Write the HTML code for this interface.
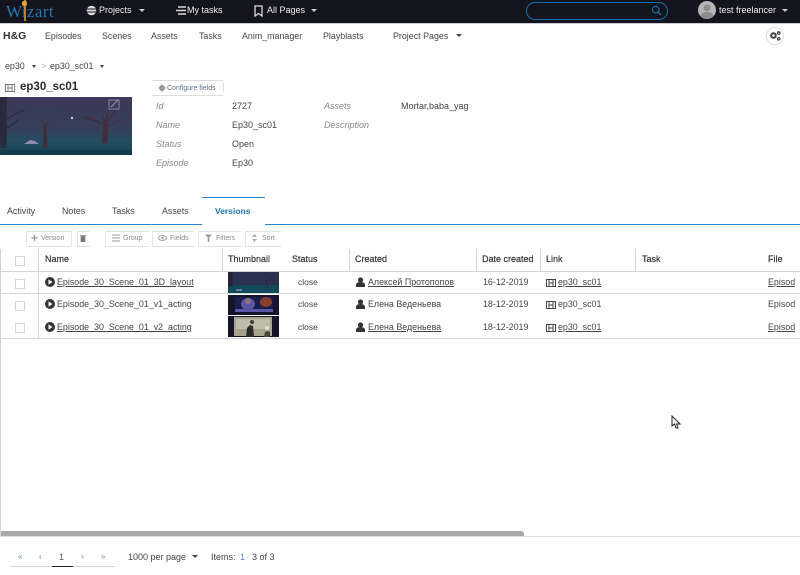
<!DOCTYPE html>
<html><head><meta charset="utf-8"><style>
html,body{margin:0;padding:0;background:#fff}
body{width:800px;height:575px;position:relative;overflow:hidden;font:9px "Liberation Sans",sans-serif;color:#333}
.a,.t{position:absolute;white-space:nowrap}
.t{line-height:12px;height:12px}
.nav{color:#eee;font-size:9px}
.m{color:#444;font-size:8.900px}
.l{color:#888;font-style:italic;font-size:9px}
.v{color:#444;font-size:9px}
.h{color:#333;font-size:9px;font-weight:normal;-webkit-text-stroke:.2px #333}
.u{text-decoration:underline;color:#333}
.r{font-size:8.900px;color:#444}
.car{position:absolute;width:0;height:0;border-left:3px solid transparent;border-right:3px solid transparent;border-top:3px solid #444}
.btn{position:absolute;top:231px;height:14px;border-top:1px solid #e2e2e2;border-bottom:1px solid #e2e2e2;border-left:1px solid #e6e6e6}
.bt{color:#888;font-size:7px}
.ln{position:absolute;background:#d4d4d4}
.cb{position:absolute;left:15px;width:8px;height:8px;border:1px solid #d6d6d6}
</style></head><body>
<div class="a" style="left:0;top:0;width:800px;height:23px;background:#14141e"></div>
<div class="a" style="left:0;top:23px;width:800px;height:1px;background:#ccc"></div>
<div class="t" style="left:6px;top:2px;height:20px;color:#1f78b4;font:17px/20px 'Liberation Serif',serif;letter-spacing:.4px">Wizart</div>
<div class="a" style="left:23.500px;top:0;width:2px;height:21px;background:#b8842a"></div>
<div class="a" style="left:22px;top:1px;width:5px;height:5px;background:#e0a235;border-radius:2px"></div>
<svg class="a" style="left:86px;top:5px" width="11" height="11" viewBox="0 0 11 11"><circle cx="5.500" cy="5.500" r="4.800" fill="#ddd"/><path d="M1 4h9M1 7h9" stroke="#14141e" stroke-width="1"/></svg>
<div class="t nav" style="left:99px;top:4px">Projects</div>
<div class="car" style="left:139px;top:9px;border-top-color:#ccc"></div>
<svg class="a" style="left:175px;top:5px" width="11" height="11" viewBox="0 0 11 11"><path d="M3 2h8M1 5.500h10M3 9h8" stroke="#ddd" stroke-width="1.600"/></svg>
<div class="t nav" style="left:187px;top:4px">My tasks</div>
<svg class="a" style="left:254px;top:5px" width="9" height="12" viewBox="0 0 9 12"><path d="M1 1h7v10L4.500 8.500 1 11z" fill="none" stroke="#ddd" stroke-width="1.300"/></svg>
<div class="t nav" style="left:267px;top:4px">All Pages</div>
<div class="car" style="left:311px;top:9px;border-top-color:#ccc"></div>
<div class="a" style="left:526px;top:2px;width:140px;height:16px;border:1px solid #0f6ea8;border-radius:9px"></div>
<svg class="a" style="left:651px;top:5px" width="11" height="11" viewBox="0 0 11 11"><circle cx="4.700" cy="4.700" r="3.300" fill="none" stroke="#0f6ea8" stroke-width="1.200"/><path d="M7 7l3 3" stroke="#0f6ea8" stroke-width="1.400"/></svg>
<svg class="a" style="left:698px;top:1px" width="18" height="18" viewBox="0 0 18 18"><circle cx="9" cy="9" r="9" fill="#b5b5b5"/><circle cx="9" cy="7" r="3.400" fill="#8d8d8d"/><path d="M2.500 15c1-3.500 3.500-4 6.500-4s5.500.5 6.500 4a9 9 0 0 1-13 0z" fill="#8d8d8d"/></svg>
<div class="t" style="left:719px;top:4px;color:#f0f0f0;font-size:9px">test freelancer</div>
<div class="car" style="left:782px;top:9px;border-top-color:#ccc"></div>

<div class="t" style="left:3px;top:30px;font-size:10.500px;font-weight:bold;color:#333">H&amp;G</div>
<div class="t m" style="left:45px;top:30px">Episodes</div>
<div class="t m" style="left:102px;top:30px">Scenes</div>
<div class="t m" style="left:151px;top:30px">Assets</div>
<div class="t m" style="left:199px;top:30px">Tasks</div>
<div class="t m" style="left:242px;top:30px">Anim_manager</div>
<div class="t m" style="left:323px;top:30px">Playblasts</div>
<div class="t m" style="left:393px;top:30px">Project Pages</div>
<div class="car" style="left:456px;top:34px"></div>
<div class="a" style="left:766px;top:27px;width:16px;height:16px;border:1px solid #ddd;border-radius:50%"></div>
<svg class="a" style="left:770px;top:31px" width="11" height="10" viewBox="0 0 11 10"><circle cx="3.500" cy="4.500" r="2.300" fill="none" stroke="#444" stroke-width="2"/><circle cx="8.700" cy="2" r="1.200" fill="none" stroke="#444" stroke-width="1.300"/><circle cx="8.700" cy="7.800" r="1.200" fill="none" stroke="#444" stroke-width="1.300"/></svg>

<div class="t m" style="left:5px;top:60px">ep30</div>
<div class="car" style="left:32px;top:65px;border-left-width:2.500px;border-right-width:2.500px"></div>
<div class="t" style="left:41px;top:60px;color:#aaa;font-size:9px">&gt;</div>
<div class="t m" style="left:50px;top:60px">ep30_sc01</div>
<div class="car" style="left:100px;top:65px;border-left-width:2.500px;border-right-width:2.500px"></div>
<svg class="a" style="left:5px;top:84px" width="10" height="8" viewBox="0 0 10 8"><path d="M.5.500h9v7h-9zM3 .5v7M7 .5v7M3 4h4" fill="none" stroke="#777" stroke-width="1"/></svg>
<div class="t" style="left:20px;top:81px;font-size:11.500px;font-weight:bold;color:#2a2a2a">ep30_sc01</div>

<svg class="a" style="left:0;top:97px" width="132" height="58" viewBox="0 0 132 58">
<defs><linearGradient id="g" x1="0" y1="0" x2="0" y2="1"><stop offset="0" stop-color="#3a3857"/><stop offset=".55" stop-color="#363f5a"/><stop offset=".75" stop-color="#244e62"/><stop offset="1" stop-color="#15404f"/></linearGradient></defs>
<rect width="132" height="58" fill="url(#g)"/>
<path d="M0 0h132v6c-20 3-40-3-60 1S30 10 0 5z" fill="#40385c" opacity=".7"/>
<path d="M0 0h6v50H1zM0 24c8-3 16-7 24-11M4 32c6-2 11-6 14-9" fill="#2b283c" stroke="#2b283c" stroke-width="1.200"/>
<path d="M43 50l1-22 1-2 1 2 1 22zM44 28l-4-8M46 30l3-6" fill="#3d2e3c" stroke="#43303c" stroke-width="1"/>
<path d="M102 46l2-20-1-6 3 4 1-8 1 10-1 20zM103 28c-5-5-12-7-20-8M106 26c4-4 8-9 10-14M106 30c5-2 11-6 16-7" fill="#3d2e3c" stroke="#43303e" stroke-width="1.200"/>
<path d="M24 47l6-4 5 1 4 3z" fill="#8b8bb5"/>
<circle cx="72" cy="21" r="1.200" fill="#c8c4da"/>
<rect x="109" y="3" width="10" height="9" fill="none" stroke="#8a8a9c" stroke-width="1"/><path d="M111 10l7-7" stroke="#9a9aac"/>
<path d="M0 53h132v5H0z" fill="#123a4a"/>
</svg>

<div class="a" style="left:152px;top:80px;width:71px;height:14px;border-top:1px solid #ddd;border-bottom:1px solid #ddd"></div>
<div class="a" style="left:223px;top:83px;width:1px;height:9px;background:#ddd"></div>
<svg class="a" style="left:158px;top:84px" width="8" height="8" viewBox="0 0 8 8"><circle cx="4" cy="4" r="2" fill="none" stroke="#888" stroke-width="1.500"/><path d="M4 0v8M0 4h8" stroke="#888" stroke-width=".800"/></svg>
<div class="t" style="left:167px;top:83px;font-size:7px;color:#5d6f8a">Configure fields</div>

<div class="t l" style="left:156px;top:100px">Id</div><div class="t v" style="left:232px;top:100px">2727</div>
<div class="t l" style="left:156px;top:119px">Name</div><div class="t v" style="left:232px;top:119px">Ep30_sc01</div>
<div class="t l" style="left:156px;top:138px">Status</div><div class="t v" style="left:232px;top:138px">Open</div>
<div class="t l" style="left:156px;top:157px">Episode</div><div class="t v" style="left:232px;top:157px">Ep30</div>
<div class="t l" style="left:324px;top:100px">Assets</div>
<div class="t l" style="left:324px;top:119px">Description</div>
<div class="t v" style="left:401px;top:100px;width:68px;overflow:hidden">Mortar,baba_yaga</div>

<div class="t m" style="left:7px;top:205px">Activity</div>
<div class="t m" style="left:62px;top:205px">Notes</div>
<div class="t m" style="left:112px;top:205px">Tasks</div>
<div class="t m" style="left:162px;top:205px">Assets</div>
<div class="t" style="left:215px;top:205px;color:#2277b5;font-weight:bold;font-size:8.500px">Versions</div>
<div class="a" style="left:0;top:224px;width:202px;height:1px;background:#2a85d0"></div>
<div class="a" style="left:265px;top:224px;width:535px;height:1px;background:#2a85d0"></div>
<div class="a" style="left:202px;top:197px;width:63px;height:1px;background:#2a85d0;border-radius:2px"></div>

<div class="btn" style="left:26px;width:44px;border-right:1px solid #e6e6e6"></div>
<div class="btn" style="left:77px;width:12px"></div>
<div class="btn" style="left:105px;width:43px"></div>
<div class="btn" style="left:152px;width:41px"></div>
<div class="btn" style="left:198px;width:42px"></div>
<div class="btn" style="left:245px;width:35px"></div>
<svg class="a" style="left:31px;top:234px" width="7" height="8" viewBox="0 0 7 8"><path d="M3.500 1v6M.5 4h6" stroke="#999" stroke-width="1.300"/></svg>
<div class="t bt" style="left:41px;top:233px">Version</div>
<svg class="a" style="left:80px;top:234px" width="6" height="8" viewBox="0 0 6 8"><path d="M0 1.500h6M1 2.500h4v5.500H1z" fill="#777" stroke="#777" stroke-width=".700"/></svg>
<svg class="a" style="left:112px;top:234px" width="8" height="8" viewBox="0 0 8 8"><path d="M0 1h8M0 4h8M0 7h8" stroke="#999" stroke-width="1"/></svg>
<div class="t bt" style="left:123px;top:233px">Group</div>
<svg class="a" style="left:158px;top:235px" width="9" height="6" viewBox="0 0 9 6"><ellipse cx="4.500" cy="3" rx="4" ry="2.400" fill="none" stroke="#999"/><circle cx="4.500" cy="3" r="1.200" fill="#999"/></svg>
<div class="t bt" style="left:170px;top:233px">Fields</div>
<svg class="a" style="left:205px;top:234px" width="7" height="8" viewBox="0 0 7 8"><path d="M0 .500h7L4.300 3.500V8H2.700V3.500z" fill="#999"/></svg>
<div class="t bt" style="left:216px;top:233px">Filters</div>
<svg class="a" style="left:252px;top:234px" width="5" height="8" viewBox="0 0 5 8"><path d="M2.500 0L5 3H0zM2.500 8L0 5h5z" fill="#aaa"/></svg>
<div class="t bt" style="left:262px;top:233px">Sort</div>

<div class="ln" style="left:0;top:249px;width:1px;height:287px"></div>
<div class="ln" style="left:38px;top:249px;width:1px;height:89px"></div>
<div class="ln" style="left:222px;top:249px;width:1px;height:22px"></div>
<div class="ln" style="left:349px;top:249px;width:1px;height:22px"></div>
<div class="ln" style="left:476px;top:249px;width:1px;height:22px"></div>
<div class="ln" style="left:540px;top:249px;width:1px;height:22px"></div>
<div class="ln" style="left:635px;top:249px;width:1px;height:22px"></div>
<div class="ln" style="left:0;top:271px;width:800px;height:1px"></div>
<div class="ln" style="left:0;top:293px;width:800px;height:1px"></div>
<div class="ln" style="left:0;top:338px;width:800px;height:1px"></div>
<div class="cb" style="top:256px"></div><div class="cb" style="top:279px"></div><div class="cb" style="top:301px"></div><div class="cb" style="top:323px"></div>

<div class="t h" style="left:45px;top:253px">Name</div>
<div class="t h" style="left:228px;top:253px">Thumbnail</div>
<div class="t h" style="left:292px;top:253px">Status</div>
<div class="t h" style="left:355px;top:253px">Created</div>
<div class="t h" style="left:482px;top:253px">Date created</div>
<div class="t h" style="left:546px;top:253px">Link</div>
<div class="t h" style="left:642px;top:253px">Task</div>
<div class="t h" style="left:768px;top:253px">File</div>

<svg class="a" style="left:45px;top:277px" width="10" height="10" viewBox="0 0 10 10"><circle cx="5" cy="5" r="5" fill="#333"/><path d="M3.500 2.400L7.500 5 3.500 7.600z" fill="#fff"/></svg>
<svg class="a" style="left:45px;top:299px" width="10" height="10" viewBox="0 0 10 10"><circle cx="5" cy="5" r="5" fill="#333"/><path d="M3.500 2.400L7.500 5 3.500 7.600z" fill="#fff"/></svg>
<svg class="a" style="left:45px;top:322px" width="10" height="10" viewBox="0 0 10 10"><circle cx="5" cy="5" r="5" fill="#333"/><path d="M3.500 2.400L7.500 5 3.500 7.600z" fill="#fff"/></svg>
<div class="t r u" style="left:57px;top:276px">Episode_30_Scene_01_3D_layout</div>
<div class="t r" style="left:57px;top:298px">Episode_30_Scene_01_v1_acting</div>
<div class="t r u" style="left:57px;top:321px">Episode_30_Scene_01_v2_acting</div>

<svg class="a" style="left:228px;top:272px" width="51" height="21" viewBox="0 0 51 21"><rect width="51" height="21" fill="#2b3150"/><rect y="13" width="51" height="8" fill="#134a5b"/><path d="M0 0h4v14H0zM38 8l2 9M40 10l5-4" stroke="#2a2434" fill="#252234"/><path d="M8 18h6" stroke="#8b8bb5" stroke-width="1.500"/></svg>
<svg class="a" style="left:228px;top:295px" width="51" height="20" viewBox="0 0 51 20"><rect width="51" height="20" fill="#15142a"/><rect x="7" y="2" width="38" height="15" fill="#1a1c4c"/><ellipse cx="20" cy="9" rx="7" ry="6" fill="#5a55a0"/><circle cx="20" cy="6" r="3" fill="#8a7278"/><ellipse cx="38" cy="7" rx="6" ry="5" fill="#8c3e2e"/><path d="M7 14h38v3H7z" fill="#5a56a8"/></svg>
<svg class="a" style="left:228px;top:316px" width="51" height="21" viewBox="0 0 51 21"><rect width="51" height="21" fill="#14142a"/><rect x="6" y="1" width="38" height="19" fill="#a8a48c"/><rect x="8" y="3" width="34" height="10" fill="#c0bcaa"/><path d="M18 21l1-9 3-3 3 1 1 11z" fill="#2b2b2b"/><circle cx="24" cy="6" r="2" fill="#4a3a30"/><path d="M36 21l1-5 3-1 2 1v5z" fill="#444"/><circle cx="39" cy="12" r="2" fill="#ddd"/></svg>

<div class="t r" style="left:298px;top:276px;font-size:8.500px">close</div>
<div class="t r" style="left:298px;top:298px;font-size:8.500px">close</div>
<div class="t r" style="left:298px;top:321px;font-size:8.500px">close</div>

<svg class="a" style="left:356px;top:277px" width="9" height="10" viewBox="0 0 9 10"><circle cx="4.500" cy="3" r="2.600" fill="#333"/><path d="M0 10V8c0-2 2-3 4.500-3S9 6 9 8v2z" fill="#333"/></svg>
<svg class="a" style="left:356px;top:299px" width="9" height="10" viewBox="0 0 9 10"><circle cx="4.500" cy="3" r="2.600" fill="#333"/><path d="M0 10V8c0-2 2-3 4.500-3S9 6 9 8v2z" fill="#333"/></svg>
<svg class="a" style="left:356px;top:322px" width="9" height="10" viewBox="0 0 9 10"><circle cx="4.500" cy="3" r="2.600" fill="#333"/><path d="M0 10V8c0-2 2-3 4.500-3S9 6 9 8v2z" fill="#333"/></svg>
<div class="t r u" style="left:368px;top:276px">Алексей Протопопов</div>
<div class="t r" style="left:368px;top:298px">Елена Веденьева</div>
<div class="t r u" style="left:368px;top:321px">Елена Веденьева</div>

<div class="t r" style="left:483px;top:276px">16-12-2019</div>
<div class="t r" style="left:483px;top:298px">18-12-2019</div>
<div class="t r" style="left:483px;top:321px">18-12-2019</div>

<svg class="a" style="left:546px;top:279px" width="10" height="8" viewBox="0 0 10 8"><path d="M.5.500h9v7h-9zM3 .5v7M7 .5v7M3 4h4" fill="none" stroke="#444" stroke-width="1"/></svg>
<svg class="a" style="left:546px;top:301px" width="10" height="8" viewBox="0 0 10 8"><path d="M.5.500h9v7h-9zM3 .5v7M7 .5v7M3 4h4" fill="none" stroke="#444" stroke-width="1"/></svg>
<svg class="a" style="left:546px;top:324px" width="10" height="8" viewBox="0 0 10 8"><path d="M.5.500h9v7h-9zM3 .5v7M7 .5v7M3 4h4" fill="none" stroke="#444" stroke-width="1"/></svg>
<div class="t r u" style="left:558px;top:276px">ep30_sc01</div>
<div class="t r" style="left:558px;top:298px">ep30_sc01</div>
<div class="t r u" style="left:558px;top:321px">ep30_sc01</div>

<div class="t r u" style="left:768px;top:276px;width:27px;overflow:hidden">Episode</div>
<div class="t r" style="left:768px;top:298px;width:27px;overflow:hidden">Episode</div>
<div class="t r u" style="left:768px;top:321px;width:27px;overflow:hidden">Episode</div>

<svg class="a" style="left:671px;top:415px" width="10" height="14" viewBox="0 0 10 14"><path d="M1 1v10l2.500-2 1.500 4h2L5.500 9H9z" fill="#fff" stroke="#222" stroke-width="1"/></svg>

<div class="a" style="left:1px;top:531px;width:523px;height:5px;background:#a9a9a9;border-radius:0 3px 0 0"></div>
<div class="a" style="left:0;top:536px;width:800px;height:1px;background:#dcdcdc"></div>

<div class="t" style="left:18px;top:551px;color:#5d86b5;font-size:8px">«</div>
<div class="t" style="left:39px;top:551px;color:#5d86b5;font-size:8px">‹</div>
<div class="t" style="left:59px;top:551px;color:#555;font-size:9px">1</div>
<div class="t" style="left:81px;top:551px;color:#5d86b5;font-size:8px">›</div>
<div class="t" style="left:101px;top:551px;color:#5d86b5;font-size:8px">»</div>
<div class="a" style="left:10px;top:566px;width:105px;height:1px;background:#d4d4d4"></div>
<div class="a" style="left:52px;top:566px;width:21px;height:1px;background:#222"></div>
<div class="t" style="left:128px;top:551px;color:#444;font-size:9px">1000 per page</div>
<div class="car" style="left:192px;top:555px"></div>
<div class="t" style="left:211px;top:551px;color:#444;font-size:9px">Items:</div>
<div class="t" style="left:240px;top:551px;color:#5d86b5;font-size:9px">1</div>
<div class="t" style="left:246px;top:551px;color:#ccc;font-size:9px">-</div>
<div class="t" style="left:252px;top:551px;color:#444;font-size:9px">3 of 3</div>
</body></html>
